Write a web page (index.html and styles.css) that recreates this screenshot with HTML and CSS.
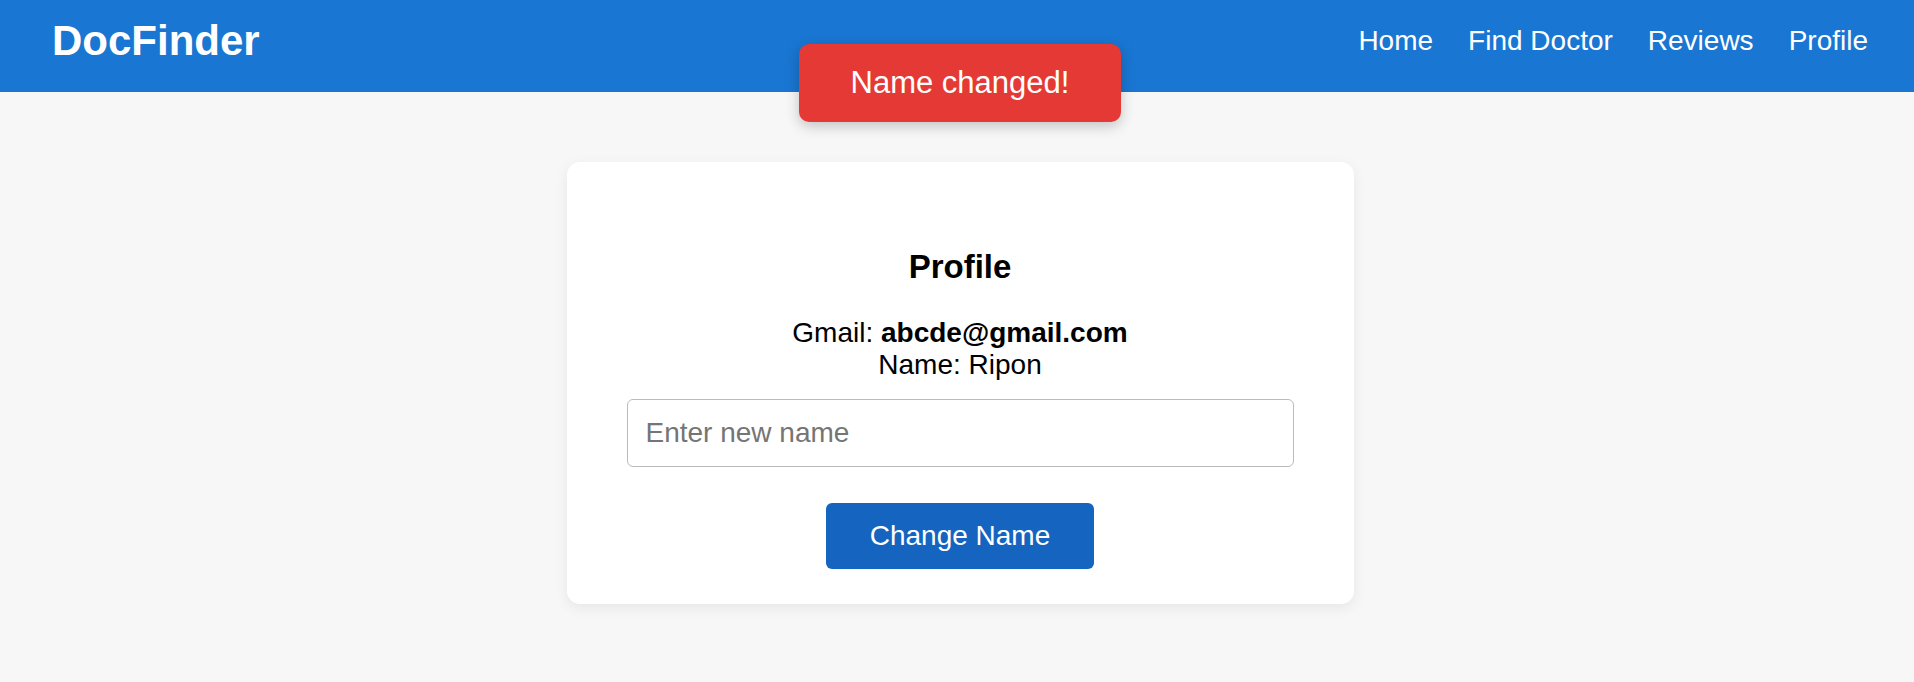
FILE: index.html
```html
<!DOCTYPE html>
<html lang="en">
<head>
<meta charset="utf-8">
<title>DocFinder</title>
<link rel="stylesheet" href="styles.css">
</head>
<body>
<header class="topbar">
  <div class="logo">DocFinder</div>
  <nav class="nav">
    <a class="nav-link" href="#">Home</a>
    <a class="nav-link" href="#">Find Doctor</a>
    <a class="nav-link" href="#">Reviews</a>
    <a class="nav-link" href="#">Profile</a>
  </nav>
</header>
<div class="toast">Name changed!</div>
<main class="main">
  <section class="card">
    <h2 class="card-title">Profile</h2>
    <p class="info">Gmail: <strong>abcde@gmail.com</strong><br>Name: Ripon</p>
    <input class="name-input" type="text" placeholder="Enter new name">
    <button class="btn" type="button">Change Name</button>
  </section>
</main>
</body>
</html>
```
FILE: styles.css
```css
html, body {
  margin: 0;
  padding: 0;
}
body {
  background: #f7f7f7;
  font-family: "Liberation Sans", Arial, sans-serif;
  color: #000;
  min-height: 682px;
}
.topbar {
  display: flex;
  align-items: center;
  justify-content: space-between;
  box-sizing: border-box;
  height: 92px;
  padding: 18px 46px 28px 52px;
  background: #1976d2;
  color: #fff;
}
.logo {
  font-size: 42px;
  font-weight: bold;
  line-height: 46px;
}
.nav {
  display: flex;
  gap: 35px;
}
.nav-link {
  color: #fff;
  text-decoration: none;
  font-size: 28px;
  line-height: 32px;
}
.toast {
  position: absolute;
  top: 44px;
  left: calc(50% + 3px);
  transform: translateX(-50%);
  box-sizing: border-box;
  width: 322px;
  height: 78px;
  display: flex;
  align-items: center;
  justify-content: center;
  background: #e53935;
  color: #fff;
  font-size: 31px;
  border-radius: 10px;
  box-shadow: 0 4px 14px rgba(0, 0, 0, 0.22);
  white-space: nowrap;
}
.main {
  display: flex;
  justify-content: center;
  padding: 70px 0 0 6px;
}
.card {
  box-sizing: border-box;
  width: 787px;
  padding: 35px 60px;
  background: #fff;
  border-radius: 13px;
  box-shadow: 0 4px 14px rgba(0, 0, 0, 0.07);
  display: flex;
  flex-direction: column;
  align-items: center;
  text-align: center;
}
.card-title {
  margin: 50px 0 31px;
  font-size: 33px;
  font-weight: bold;
  line-height: 39px;
}
.info {
  margin: 0 0 18px;
  font-size: 28px;
  line-height: 32px;
}
.info strong {
  font-weight: bold;
}
.name-input {
  box-sizing: border-box;
  width: 100%;
  height: 68px;
  margin: 0 0 36px;
  padding: 0 18px;
  border: 1px solid #bbb;
  border-radius: 6px;
  font-family: "Liberation Sans", Arial, sans-serif;
  font-size: 28px;
  color: #000;
  background: #fff;
  outline: none;
}
.name-input::placeholder {
  color: #757575;
}
.btn {
  box-sizing: border-box;
  height: 66px;
  padding: 0 44px;
  border: none;
  border-radius: 6px;
  background: #1565c0;
  color: #fff;
  font-family: "Liberation Sans", Arial, sans-serif;
  font-size: 28px;
  cursor: pointer;
}
```
